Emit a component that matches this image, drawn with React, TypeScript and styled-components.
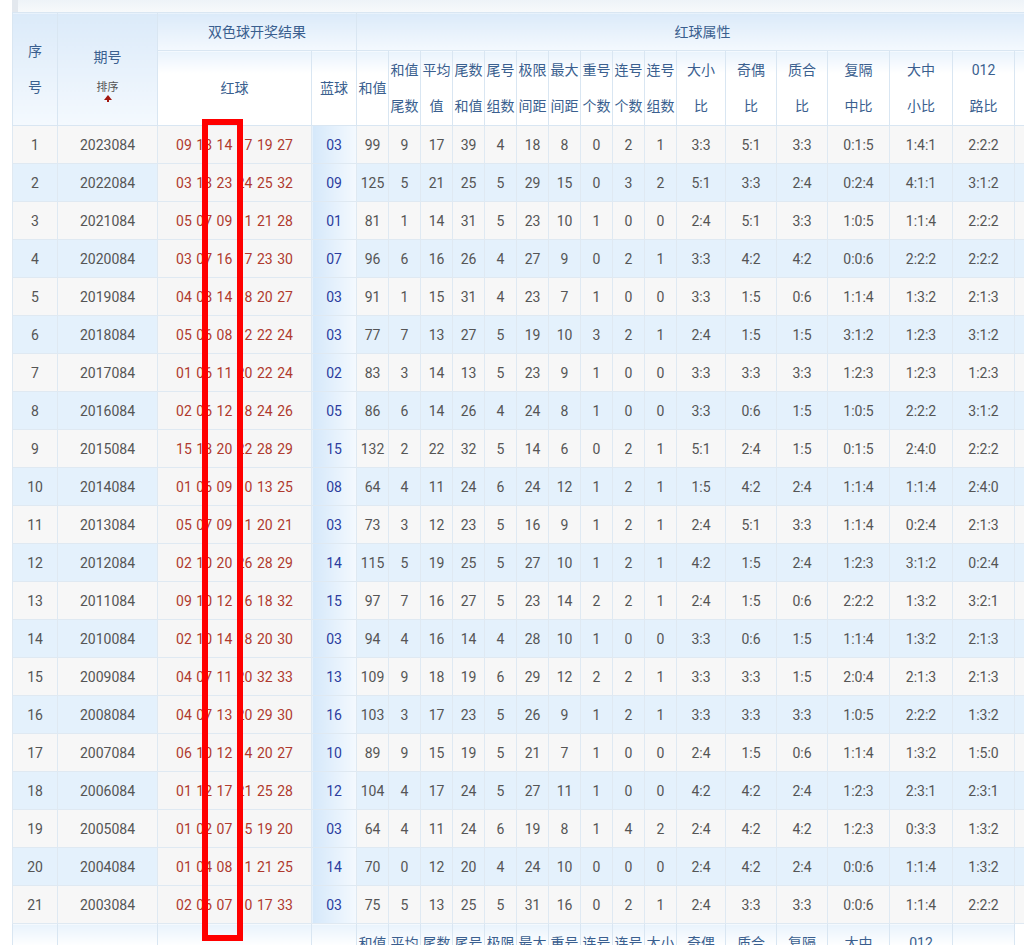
import styled, { createGlobalStyle } from "styled-components";

const Global = createGlobalStyle`
  html, body { margin: 0; padding: 0; background: #fff; overflow: hidden; }
  body { font-family: Roboto, "Noto Sans CJK SC", sans-serif; }
`;

const Page = styled.div`
  width: 1024px;
  height: 945px;
  overflow: hidden;
  position: relative;
`;

const TopStrip = styled.div`
  height: 12px;
  margin-left: 12px;
  background: linear-gradient(#eef3f8, #f7f9fb);
  border-left: 6px solid #e3e8ee;
`;

const Wrap = styled.div`
  padding-left: 12px;
`;

const Table = styled.table`
  border-collapse: collapse;
  table-layout: fixed;
  width: 1036px;
  font-size: 14px;
  color: #555;
  text-align: center;
`;

const Th = styled.th<{ $top?: boolean }>`
  font-weight: normal;
  color: #3a5f8f;
  border: 1px solid #d9e6f2;
  background: ${({ $top }) =>
    $top ? "linear-gradient(#dbeaf9, #f4f9fe)" : "linear-gradient(#e9f3fc, #ffffff 30%)"};
  padding: 0;
  line-height: 36px;
  height: ${({ $top }) => ($top ? "37px" : "74px")};
`;

const Td = styled.td<{ $even: boolean }>`
  height: 37px;
  padding: 0;
  border: 1px solid #dfe9f2;
  background: ${({ $even }) => ($even ? "#e4f1fc" : "#f7f7f7")};
  white-space: nowrap;
`;

const RedTd = styled(Td)`
  background: #f6f6f6;
  color: #b03a2e;
  word-spacing: 1px;
`;

const BlueTd = styled(Td)`
  background: linear-gradient(90deg, #d5e8fa, #f4f9fe);
  color: #2c3d9e;
`;

const Sort = styled.div`
  font-size: 11px;
  line-height: 14px;
  color: #555;
  margin-top: 6px;
`;

const Arrow = styled.div`
  width: 0;
  height: 0;
  margin: 0 auto;
  border-left: 4px solid transparent;
  border-right: 4px solid transparent;
  border-bottom: 5px solid #a3170f;
  position: relative;
  &::after {
    content: "";
    position: absolute;
    left: -1px;
    top: 4px;
    width: 2px;
    height: 3px;
    background: #a3170f;
  }
`;

const Highlight = styled.div`
  position: absolute;
  left: 202px;
  top: 119px;
  width: 29px;
  height: 810px;
  border: 6px solid #f00;
  pointer-events: none;
`;

const rows: string[][] = [
  ["2023084", "09 13 14 17 19 27", "03", "99", "9", "17", "39", "4", "18", "8", "0", "2", "1", "3:3", "5:1", "3:3", "0:1:5", "1:4:1", "2:2:2"],
  ["2022084", "03 13 23 24 25 32", "09", "125", "5", "21", "25", "5", "29", "15", "0", "3", "2", "5:1", "3:3", "2:4", "0:2:4", "4:1:1", "3:1:2"],
  ["2021084", "05 07 09 11 21 28", "01", "81", "1", "14", "31", "5", "23", "10", "1", "0", "0", "2:4", "5:1", "3:3", "1:0:5", "1:1:4", "2:2:2"],
  ["2020084", "03 07 16 17 23 30", "07", "96", "6", "16", "26", "4", "27", "9", "0", "2", "1", "3:3", "4:2", "4:2", "0:0:6", "2:2:2", "2:2:2"],
  ["2019084", "04 08 14 18 20 27", "03", "91", "1", "15", "31", "4", "23", "7", "1", "0", "0", "3:3", "1:5", "0:6", "1:1:4", "1:3:2", "2:1:3"],
  ["2018084", "05 06 08 12 22 24", "03", "77", "7", "13", "27", "5", "19", "10", "3", "2", "1", "2:4", "1:5", "1:5", "3:1:2", "1:2:3", "3:1:2"],
  ["2017084", "01 06 11 20 22 24", "02", "83", "3", "14", "13", "5", "23", "9", "1", "0", "0", "3:3", "3:3", "3:3", "1:2:3", "1:2:3", "1:2:3"],
  ["2016084", "02 06 12 18 24 26", "05", "86", "6", "14", "26", "4", "24", "8", "1", "0", "0", "3:3", "0:6", "1:5", "1:0:5", "2:2:2", "3:1:2"],
  ["2015084", "15 18 20 22 28 29", "15", "132", "2", "22", "32", "5", "14", "6", "0", "2", "1", "5:1", "2:4", "1:5", "0:1:5", "2:4:0", "2:2:2"],
  ["2014084", "01 06 09 10 13 25", "08", "64", "4", "11", "24", "6", "24", "12", "1", "2", "1", "1:5", "4:2", "2:4", "1:1:4", "1:1:4", "2:4:0"],
  ["2013084", "05 07 09 11 20 21", "03", "73", "3", "12", "23", "5", "16", "9", "1", "2", "1", "2:4", "5:1", "3:3", "1:1:4", "0:2:4", "2:1:3"],
  ["2012084", "02 10 20 26 28 29", "14", "115", "5", "19", "25", "5", "27", "10", "1", "2", "1", "4:2", "1:5", "2:4", "1:2:3", "3:1:2", "0:2:4"],
  ["2011084", "09 10 12 16 18 32", "15", "97", "7", "16", "27", "5", "23", "14", "2", "2", "1", "2:4", "1:5", "0:6", "2:2:2", "1:3:2", "3:2:1"],
  ["2010084", "02 10 14 18 20 30", "03", "94", "4", "16", "14", "4", "28", "10", "1", "0", "0", "3:3", "0:6", "1:5", "1:1:4", "1:3:2", "2:1:3"],
  ["2009084", "04 07 11 20 32 33", "13", "109", "9", "18", "19", "6", "29", "12", "2", "2", "1", "3:3", "3:3", "1:5", "2:0:4", "2:1:3", "2:1:3"],
  ["2008084", "04 07 13 20 29 30", "16", "103", "3", "17", "23", "5", "26", "9", "1", "2", "1", "3:3", "3:3", "3:3", "1:0:5", "2:2:2", "1:3:2"],
  ["2007084", "06 10 12 14 20 27", "10", "89", "9", "15", "19", "5", "21", "7", "1", "0", "0", "2:4", "1:5", "0:6", "1:1:4", "1:3:2", "1:5:0"],
  ["2006084", "01 12 17 21 25 28", "12", "104", "4", "17", "24", "5", "27", "11", "1", "0", "0", "4:2", "4:2", "2:4", "1:2:3", "2:3:1", "2:3:1"],
  ["2005084", "01 02 07 15 19 20", "03", "64", "4", "11", "24", "6", "19", "8", "1", "4", "2", "2:4", "4:2", "4:2", "1:2:3", "0:3:3", "1:3:2"],
  ["2004084", "01 04 08 11 21 25", "14", "70", "0", "12", "20", "4", "24", "10", "0", "0", "0", "2:4", "4:2", "2:4", "0:0:6", "1:1:4", "1:3:2"],
  ["2003084", "02 06 07 10 17 33", "03", "75", "5", "13", "25", "5", "31", "16", "0", "2", "1", "2:4", "3:3", "3:3", "0:0:6", "1:1:4", "2:2:2"],
];

const subHeads: [string, string][] = [
  ["和值", "尾数"], ["平均", "值"], ["尾数", "和值"], ["尾号", "组数"], ["极限", "间距"],
  ["最大", "间距"], ["重号", "个数"], ["连号", "个数"], ["连号", "组数"], ["大小", "比"],
  ["奇偶", "比"], ["质合", "比"], ["复隔", "中比"], ["大中", "小比"], ["012", "路比"], ["", ""],
];

const widths = [45, 100, 154, 45, 32, 32, 32, 32, 32, 32, 32, 32, 32, 32, 49, 51, 51, 62, 63, 62, 34];

export default function App() {
  return (
    <Page>
      <Global />
      <TopStrip />
      <Wrap>
        <Table>
          <colgroup>
            {widths.map((w, i) => (
              <col key={i} style={{ width: w }} />
            ))}
          </colgroup>
          <thead>
            <tr>
              <Th $top rowSpan={2}>
                序<br />号
              </Th>
              <Th $top rowSpan={2}>
                期号
                <Sort>排序</Sort>
                <Arrow />
              </Th>
              <Th $top colSpan={2}>双色球开奖结果</Th>
              <Th $top colSpan={17}>红球属性</Th>
            </tr>
            <tr>
              <Th>红球</Th>
              <Th>蓝球</Th>
              <Th>和值</Th>
              {subHeads.map(([a, b], i) => (
                <Th key={i}>
                  {a}
                  <br />
                  {b}
                </Th>
              ))}
            </tr>
          </thead>
          <tbody>
            {rows.map((r, i) => {
              const even = i % 2 === 1;
              return (
                <tr key={i}>
                  <Td $even={even}>{i + 1}</Td>
                  <Td $even={even}>{r[0]}</Td>
                  <RedTd $even={even}>{r[1]}</RedTd>
                  <BlueTd $even={even}>{r[2]}</BlueTd>
                  {r.slice(3).map((v, j) => (
                    <Td key={j} $even={even}>{v}</Td>
                  ))}
                  <Td $even={even} />
                </tr>
              );
            })}
            <tr>
              <Th />
              <Th />
              <Th />
              <Th />
              {subHeads.map(([a, b], i) => (
                <Th key={i}>
                  {a}
                  <br />
                  {b}
                </Th>
              ))}
            </tr>
          </tbody>
        </Table>
      </Wrap>
      <Highlight />
    </Page>
  );
}
